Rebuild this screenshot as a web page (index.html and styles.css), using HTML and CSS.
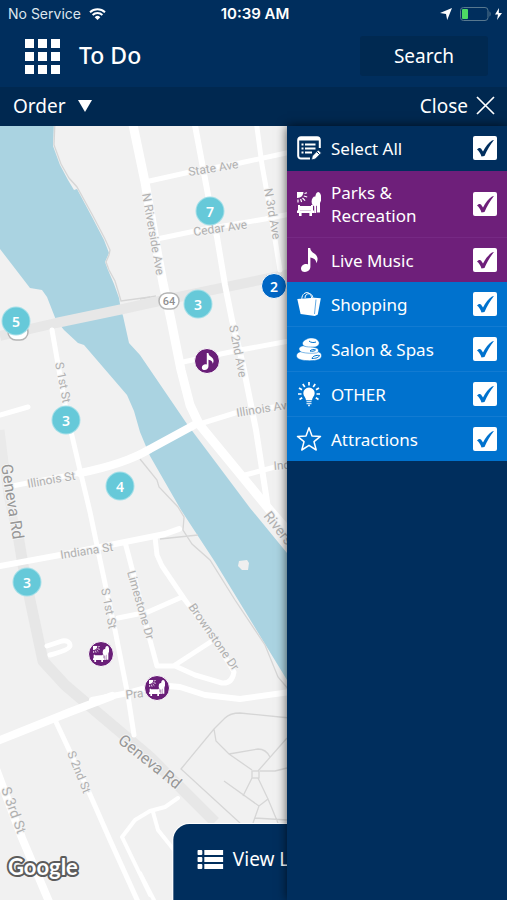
FILE: index.html
```html
<!DOCTYPE html>
<html lang="en">
<head>
<meta charset="utf-8">
<meta name="viewport" content="width=device-width, initial-scale=1">
<title>To Do</title>
<link rel="stylesheet" href="styles.css">
</head>
<body>
<svg class="defs" width="0" height="0" aria-hidden="true">
  <symbol id="i-park" viewBox="0 0 24 24">
    <path d="M0 0h6.500a6.500 6.500 0 0 1-1.600 4.200A6.500 6.500 0 0 1 0 6z" fill="currentColor"/>
    <path d="M7.500 1.500l2.500-.8M6.800 4l3.400 1M5.500 6l2.600 2.600M3.600 7l1 3M1 7.400v3" stroke="currentColor" stroke-width="1.200" fill="none"/>
    <path d="M1.500 14h14v4.200h-14zM0 18.500h17v2.500H15V24h-2.600v-3H4.600V24H2v-3H0zM1 13h2v6H1zM14 13h2v6h-2z" fill="currentColor"/>
    <ellipse cx="21.200" cy="6" rx="3" ry="6" fill="currentColor"/>
    <ellipse cx="18" cy="9.500" rx="3.400" ry="5" fill="currentColor"/>
    <path d="M17.200 13h2v8h-2zM20 11h3v9.500h-3z" fill="currentColor"/>
  </symbol>
  <symbol id="i-note" viewBox="0 0 24 24">
    <path d="M11 0h2.200c.4 3.500 2.800 4.600 5 6.200 2.600 2 3.200 5.400 1.200 9-.2-3.200-2.300-5.200-6-5.700v9.300c0 3-2.600 5.200-5.400 5.200C5.600 24 4 22.700 4 20.700c0-2.600 2.600-4.700 5.200-4.700.7 0 1.300.1 1.800.4z" fill="currentColor"/>
  </symbol>
</svg>
<div class="app">
  <header class="header">
    <div class="status">
      <div class="status-left">
        <span>No Service</span>
        <svg width="17" height="12" viewBox="0 0 17 12" aria-hidden="true">
          <path d="M1 4.300a10.800 10.800 0 0 1 15 0M3.600 7a7 7 0 0 1 9.800 0" fill="none" stroke="#fff" stroke-width="1.900"/>
          <path d="M8.500 12L5.700 9.200a4 4 0 0 1 5.600 0z" fill="#fff"/>
        </svg>
      </div>
      <span class="time">10:39 AM</span>
      <div class="status-right">
        <svg width="12" height="12" viewBox="0 0 12 12" aria-hidden="true"><path d="M12 0L7.200 12 6 6 0 5z" fill="#fff"/></svg>
        <svg width="42" height="14" viewBox="0 0 42 14" aria-hidden="true">
          <rect x=".5" y=".5" width="27.500" height="13" rx="3" fill="none" stroke="#58788f"/>
          <rect x="2" y="2" width="6" height="10" rx="1" fill="#4cd964"/>
          <path d="M29.500 4.500c1.500.5 1.500 4.500 0 5z" fill="#58788f"/>
          <path d="M39 1l-4 6.500h3L37 13l5-7h-3.200z" fill="#fff"/>
        </svg>
      </div>
    </div>
    <div class="titlebar">
      <button class="menu" type="button" aria-label="Menu">
        <i></i><i></i><i></i><i></i><i></i><i></i><i></i><i></i><i></i>
      </button>
      <h1>To Do</h1>
      <button class="search" type="button">Search</button>
    </div>
    <div class="toolbar">
      <button class="tool" type="button">Order
        <svg class="caret" width="14" height="12" viewBox="0 0 14 12" aria-hidden="true"><path d="M0 0h14L7 12z" fill="#fff"/></svg>
      </button>
      <button class="tool" type="button">Close
        <svg class="cross" width="19" height="19" viewBox="0 0 19 19" aria-hidden="true"><path d="M1 1l17 17M18 1L1 18" stroke="#fff" stroke-width="1.700"/></svg>
      </button>
    </div>
  </header>

  <main class="stage">
    <svg class="map" viewBox="0 126 507 774" preserveAspectRatio="xMinYMin slice" role="img" aria-label="Street map">
      <rect y="126" width="507" height="774" fill="#f1f1f1"/>
      <path fill="#aad3e1" d="M0 120H54L53 146L60 165L68 180L74 190L77 189L92 217L104 240L109 253L105 262L108 270L114 284L119 298L121 310L123 316L129 343L140 355L187 424L250 508L287 553L340 620V760L287 680L215 562L181 510L150 456L140 432L134 411L127 395L84 345L78 343L64 330L56 320L47 297L42 290L30 288L0 249Z"/>
      <path d="M239 561l8-1 2 3-1 7h-6l-4-4z" fill="#efefef"/>
      <g class="trail">
        <path d="M55 120L54 145L61 164L69 178L77 187L93 216L105 239L110 250L109 255L106 262L109 270L115 281L119 294L121 301L150 297"/>
        <path d="M140 459L157 480L159 487L178 507L184 517L183 530L192 544L210 560L235 600L265 645L278 677L289 690M160 539L198 535M140 299L156 296"/>
        <path d="M290 718L240 713Q230 713 225 718L214 729L181 769L240 823M214 729L216 741L229 754L252 770M229 754L258 749Q266 749 270 757M258 771L287 738M260 771H275L287 768M252 778L243 796M224 781L259 806L268 799L258 778M268 799L278 823M259 806L253 823M255 818L287 820"/>
        <rect x="252" y="771" width="7" height="7"/>
      </g>
      <g class="trunk">
        <path d="M0 336L56 323L123 309L150 303L207 291L260 280L340 264"/>
        <path class="faint" d="M0 430L8 495L18 540"/>
        <path class="wide" d="M18 535L23 565L30 600L43 661L65 685L92 708L150 757L215 822"/>
      </g>
      <g class="road">
        <path class="w9" d="M132 120L145 182L155 240L163 283L171 320L181 370L190 405L199 424L268 508L300 545"/>
        <path class="w6" d="M194 120L209 200L217 237L225 285L232 320L243 365L256 430L268 508"/>
        <path class="w5" d="M256 120L262 165L271 215L280 270"/>
        <path class="w5" d="M145 182L190 172L240 163L300 150M157 239L200 230L265 219L300 212M183 362L235 351L300 339M245 475L275 467L300 463"/>
        <path class="w5" d="M190 427L235 413L300 403M0 415L28 407M12 486L80 473"/>
        <path class="w8" d="M80 473Q125 464 150 449L196 424"/>
        <path class="w5" d="M52 330L66 410L80 470L90 512L100 560L115 630L128 696L134 735"/>
        <path class="w6" d="M0 566L60 555L100 547L150 537L165 534L179 529"/>
        <path class="w5" d="M47 646L62 641Q70 640 70 646Q69 650 50 655"/>
        <path class="w5" d="M125 542L135 580L150 640L157 666L175 666L195 675L222 683Q232 684 234 672L215 640L185 600L162 566L157 555L155 537M118 618L148 612L182 597M175 665L212 641"/>
        <path class="w6" d="M92 700L128 693L157 685L180 687L205 695L240 699L290 692"/>
        <path class="w8" d="M-5 742L70 712L112 696M-5 766L22 838L50 904"/>
        <path class="w5" d="M56 722L88 790L110 840L139 904"/>
        <path class="w4" d="M178 798L165 807L150 811L135 820L122 837L150 895M153 812L158 830L174 850M140 873L156 904"/>
      </g>
      <g class="label">
        <text transform="translate(189 176) rotate(-9)">State Ave</text>
        <text transform="translate(194 236) rotate(-8)">Cedar Ave</text>
        <text transform="translate(142 194) rotate(80)">N Riverside Ave</text>
        <text transform="translate(264 189) rotate(80)">N 3rd Ave</text>
        <text transform="translate(229 326) rotate(79)">S 2nd Ave</text>
        <text transform="translate(55 363) rotate(79)">S 1st St</text>
        <text transform="translate(28 488) rotate(-10)">Illinois St</text>
        <text transform="translate(237 417) rotate(-9)">Illinois Ave</text>
        <text transform="translate(274 470) rotate(-5)">Indiana Ave</text>
        <text transform="translate(61 559) rotate(-9)">Indiana St</text>
        <text transform="translate(101 589) rotate(79)">S 1st St</text>
        <text transform="translate(127 572) rotate(74)">Limestone Dr</text>
        <text transform="translate(188 607) rotate(55)">Brownstone Dr</text>
        <text transform="translate(126 699) rotate(-6)">Pra</text>
        <text transform="translate(67 753) rotate(68)">S 2nd St</text>
        <text class="md" transform="translate(1 789) rotate(70)">S 3rd St</text>
        <text class="md" transform="translate(263 516) rotate(52)">Riverside Ave</text>
        <text class="lg" transform="translate(1 465) rotate(81)">Geneva Rd</text>
        <text class="lg" transform="translate(117 742) rotate(39)">Geneva Rd</text>
      </g>
      <g class="shield">
        <rect x="159" y="293" width="20" height="16" rx="8"/>
        <text x="169" y="305">64</text>
        <rect x="8" y="324" width="20" height="16" rx="8"/>
      </g>
      <text class="brand" x="8" y="875">Google</text>
    </svg>

    <button class="pin cluster p1" type="button">7</button>
    <button class="pin cluster p2" type="button">3</button>
    <button class="pin cluster p3" type="button">5</button>
    <button class="pin cluster p4" type="button">3</button>
    <button class="pin cluster p5" type="button">4</button>
    <button class="pin cluster p6" type="button">3</button>
    <button class="pin pair p7" type="button">2</button>
    <button class="pin place p8" type="button" aria-label="Live Music"><svg width="17" height="17"><use href="#i-note"/></svg></button>
    <button class="pin place p9" type="button" aria-label="Parks &amp; Recreation"><svg width="16" height="16"><use href="#i-park"/></svg></button>
    <button class="pin place p10" type="button" aria-label="Parks &amp; Recreation"><svg width="16" height="16"><use href="#i-park"/></svg></button>

    <button class="view-list" type="button">
      <svg width="26" height="19" viewBox="0 0 26 19" fill="#fff" aria-hidden="true">
        <rect width="5" height="5" rx="1"/><rect x="7" width="19" height="5"/>
        <rect y="7" width="5" height="5" rx="1"/><rect x="7" y="7" width="19" height="5"/>
        <rect y="14" width="5" height="5" rx="1"/><rect x="7" y="14" width="19" height="5"/>
      </svg>
      View List
    </button>

    <aside class="panel">
      <div class="group navy">
        <label class="row">
          <svg class="icon" viewBox="0 0 24 24" fill="none" stroke="#fff" aria-hidden="true">
            <path d="M13 22.500H4A2.800 2.800 0 0 1 1.200 20V4A2.800 2.800 0 0 1 4 1.200H20A2.800 2.800 0 0 1 22.800 4V12" stroke-width="2"/>
            <path d="M2 3h20" stroke-width="3"/>
            <path d="M8 8.500h10.500M8 12.500h10.500M8 16.500h7M4.500 8.500h2M4.500 12.500h2M4.500 16.500h2" stroke-width="1.800"/>
            <path d="M14.500 24l.8-4 6-6 3 3-6 6z" fill="#fff" stroke="#002e5d" stroke-width=".8"/>
            <path d="M19.500 15.500l3 3" stroke="#002e5d"/>
          </svg>
          <span>Select All</span><input type="checkbox" checked>
        </label>
      </div>
      <div class="group purple">
        <label class="row">
          <svg class="icon" aria-hidden="true"><use href="#i-park"/></svg>
          <span>Parks &amp; Recreation</span><input type="checkbox" checked>
        </label>
        <label class="row">
          <svg class="icon" aria-hidden="true"><use href="#i-note"/></svg>
          <span>Live Music</span><input type="checkbox" checked>
        </label>
      </div>
      <div class="group blue">
        <label class="row">
          <svg class="icon" viewBox="0 0 24 24" aria-hidden="true">
            <path d="M.3 7l17-1.300 6.500.6-3 16.200-3 1.500L3.600 22z" fill="#fff"/>
            <path d="M5 9C4 3 7.500.6 10 .6S14.500 3 15 8M8 6C8 3 10 1.700 12 1.700S15.500 3 16 6" fill="none" stroke="#fff" stroke-width="1"/>
            <path d="M19 7.500L17.500 22" stroke="#0072ce" stroke-width=".6"/>
          </svg>
          <span>Shopping</span><input type="checkbox" checked>
        </label>
        <label class="row">
          <svg class="icon" viewBox="0 0 24 24" aria-hidden="true">
            <g fill="#fff" stroke="#0072ce" stroke-width=".5">
              <path d="M-.5 19c0-3 3-4.500 6-4.500h13c4 0 6 1.700 6 4.500 0 3-4 4.700-12 4.700S-.5 22-.5 19z"/>
              <path d="M2 12c0-2 3-3.500 6-3.200 4 .3 8 1 12 2.500 2 1 2 4-.5 4.600-4 .8-10.500.3-14-.5C3.500 15 2 13.500 2 12z"/>
              <path d="M5.500 6.500c0-2.500 4-4.800 7.500-5.500 4-.6 8 1 9 4 .8 2.600-1.500 5-5 5-4 0-11.500.5-11.500-3.500z"/>
            </g>
            <path d="M15 21.500c.5-2.500 4.500-3.500 7.500-3-.5 2-4 3-7.500 3zM13 14c1.500-1.600 3.500-1.800 5.500-1-1 1.300-3.500 1.500-5.500 1zM12 4c1.500 1.500 4.500 2 7 1" fill="none" stroke="#0072ce"/>
          </svg>
          <span>Salon &amp; Spas</span><input type="checkbox" checked>
        </label>
        <label class="row">
          <svg class="icon" viewBox="0 0 24 24" aria-hidden="true">
            <path d="M12 5.500a5.700 5.700 0 0 1 5.700 5.700c0 3-2.700 4.300-2.700 7H9c0-2.700-2.700-4-2.700-7A5.700 5.700 0 0 1 12 5.500z" fill="#fff"/>
            <path d="M9.500 19.700h5M9.500 21.700h5M11 23.500h2" stroke="#cfe5f7" stroke-width="1.300"/>
            <path d="M12 0v3.500M5.800 2l2 3M18.200 2l-2 3M2 6l3 1.800M22 6l-3 1.800M1 12h3.500M19.500 12H23M2.500 17.500l2.700-1.700M21.500 17.500l-2.700-1.700" stroke="#fff" stroke-width="1.700"/>
          </svg>
          <span>OTHER</span><input type="checkbox" checked>
        </label>
        <label class="row">
          <svg class="icon" viewBox="0 0 24 24" aria-hidden="true">
            <path d="M12 .8l3 8.200 8.500.4-6.500 5.300 2.200 8.300L12 18.300 4.800 23 7 14.700.5 9.400 9 9z" fill="none" stroke="#fff" stroke-width="1.500" stroke-linejoin="round"/>
          </svg>
          <span>Attractions</span><input type="checkbox" checked>
        </label>
      </div>
    </aside>
  </main>
</div>
</body>
</html>
```
FILE: styles.css
```css
* { box-sizing: border-box; }

body {
  margin: 0;
  font-family: "Noto Sans", "Open Sans", sans-serif;
  color: #fff;
  background: #002e5d;
}

button {
  margin: 0;
  padding: 0;
  border: 0;
  background: none;
  color: inherit;
  font: inherit;
}

.defs { display: block; position: absolute; }

.app {
  display: flex;
  flex-direction: column;
  height: 100vh;
  overflow: hidden;
}

/* Header */
.header { background: #002e5d; }

.status {
  display: grid;
  grid-template-columns: 1fr auto 1fr;
  align-items: center;
  height: 27px;
  padding: 0 5px 0 8px;
  font-family: Inter, Roboto, sans-serif;
  font-size: 14px;
}
.status-left { display: flex; align-items: center; gap: 8px; color: #dde6ee; }
.status-right { display: flex; align-items: center; justify-content: flex-end; gap: 8px; }
.time { font-size: 15px; font-weight: 600; }

.titlebar {
  display: flex;
  align-items: center;
  height: 60px;
  padding: 0 19px 2px 25px;
}
.menu {
  display: grid;
  grid-template-columns: repeat(3, 9px);
  grid-auto-rows: 9px;
  gap: 4px;
}
.menu i { background: #fff; }
h1 {
  flex: 1;
  margin: 0 0 0 19px;
  padding-bottom: 2px;
  font-size: 23px;
  line-height: 30px;
  font-weight: 500;
}
.search {
  width: 128px;
  height: 40px;
  border-radius: 3px;
  background: #002951;
  font-size: 19px;
}

.toolbar {
  display: flex;
  justify-content: space-between;
  align-items: center;
  height: 39px;
  padding: 0 12px 2px 13px;
  background: #002850;
}
.tool { display: flex; align-items: center; gap: 8px; font-size: 19px; }
.caret { margin-left: 4px; }

/* Map */
.stage { position: relative; flex: 1; min-height: 0; }
.map { display: block; width: 100%; height: 100%; }

.trail { fill: none; stroke: #d6d6d6; stroke-width: 1.3; }
.trunk { fill: none; stroke: #e7e7e7; stroke-width: 10; stroke-linejoin: round; }
.trunk .wide { stroke-width: 11; }
.trunk .faint { stroke: #eaeaea; stroke-width: 9; }
.road { fill: none; stroke: #fff; stroke-linejoin: round; stroke-linecap: round; }
.w4 { stroke-width: 4; }
.w5 { stroke-width: 5; }
.w6 { stroke-width: 6; }
.w8 { stroke-width: 8; }
.w9 { stroke-width: 9; }

.label text {
  font-family: Roboto, sans-serif;
  font-size: 12px;
  fill: #b0b0b0;
  stroke: #f4f4f4;
  stroke-width: 2;
  paint-order: stroke;
}
.label .md { font-size: 14px; }
.label .lg { font-size: 16px; fill: #979797; }

.shield rect { fill: #fff; stroke: #b4b4b4; stroke-width: 1.5; }
.shield text {
  font-family: Roboto, sans-serif;
  font-size: 11px;
  font-weight: 500;
  text-anchor: middle;
  fill: #909090;
}
.brand {
  font-family: Lato, sans-serif;
  font-size: 22px;
  font-weight: 700;
  fill: #fff;
  stroke: #5c5c5c;
  stroke-width: 4;
  stroke-linejoin: round;
  paint-order: stroke;
}

.pin {
  position: absolute;
  display: grid;
  place-items: center;
  border-radius: 50%;
  transform: translate(-50%, -50%);
  font-size: 14px;
  font-weight: 600;
}
.cluster {
  width: 27px;
  height: 27px;
  background: #66c9d9;
  box-shadow: 0 0 0 1px #a5dfe8;
}
.pair { width: 26px; height: 26px; background: #0067c5; border: 1px solid #fff; }
.place { width: 26px; height: 26px; background: #6a1f78; border: 1px solid #fff; }

.p1 { left: 210px; top: 85px; }
.p2 { left: 198px; top: 178px; }
.p3 { left: 16px; top: 195px; }
.p4 { left: 66px; top: 294px; }
.p5 { left: 120px; top: 360px; }
.p6 { left: 27px; top: 456px; }
.p7 { left: 274px; top: 160px; }
.p8 { left: 207px; top: 235px; }
.p9 { left: 101px; top: 528px; }
.p10 { left: 157px; top: 562px; }

.view-list {
  position: absolute;
  left: 50%;
  bottom: 0;
  transform: translateX(-50%);
  display: flex;
  align-items: center;
  gap: 10px;
  height: 76px;
  padding: 0 24px 6px;
  border-radius: 16px 16px 0 0;
  background: #002e5d;
  box-shadow: 0 0 0 1px #fff;
  font-size: 19px;
  white-space: nowrap;
}

/* Filter panel */
.panel {
  position: absolute;
  top: 0;
  right: 0;
  bottom: 0;
  width: 220px;
  background: #002e5d;
  box-shadow: 0 0 10px #000a;
}
.group { display: grid; gap: 1px; }
.navy { background: #002e5d; padding-bottom: 1px; }
.purple { background: #762984; }
.purple .row { background: #6e1f7a; }
.blue { background: #127bd2; }
.blue .row { background: #0072ce; }

.row {
  display: flex;
  align-items: center;
  gap: 10px;
  min-height: 44px;
  padding: 10px;
  font-size: 17px;
  line-height: 23px;
}
.row span { flex: 1; }
.icon { flex: none; width: 24px; height: 24px; overflow: visible; }

.row input {
  appearance: none;
  flex: none;
  display: grid;
  place-items: center;
  width: 24px;
  height: 24px;
  margin: 0;
  border-radius: 2px;
  background: #fff;
}
.row input:checked::before {
  content: "";
  width: 18px;
  height: 18px;
  background: currentColor;
  clip-path: path("M1 10.500C2 9 4 8.500 5 9.500L7 12.500C9.500 7.500 12.500 4 16 1.500L18 1C14 6 11 11 8.500 17L5.500 17.500C4.500 14.500 3 12 1 10.500Z");
}
.navy input { color: #002e5d; }
.purple input { color: #6e1f7a; }
.blue input { color: #0072ce; }
```
